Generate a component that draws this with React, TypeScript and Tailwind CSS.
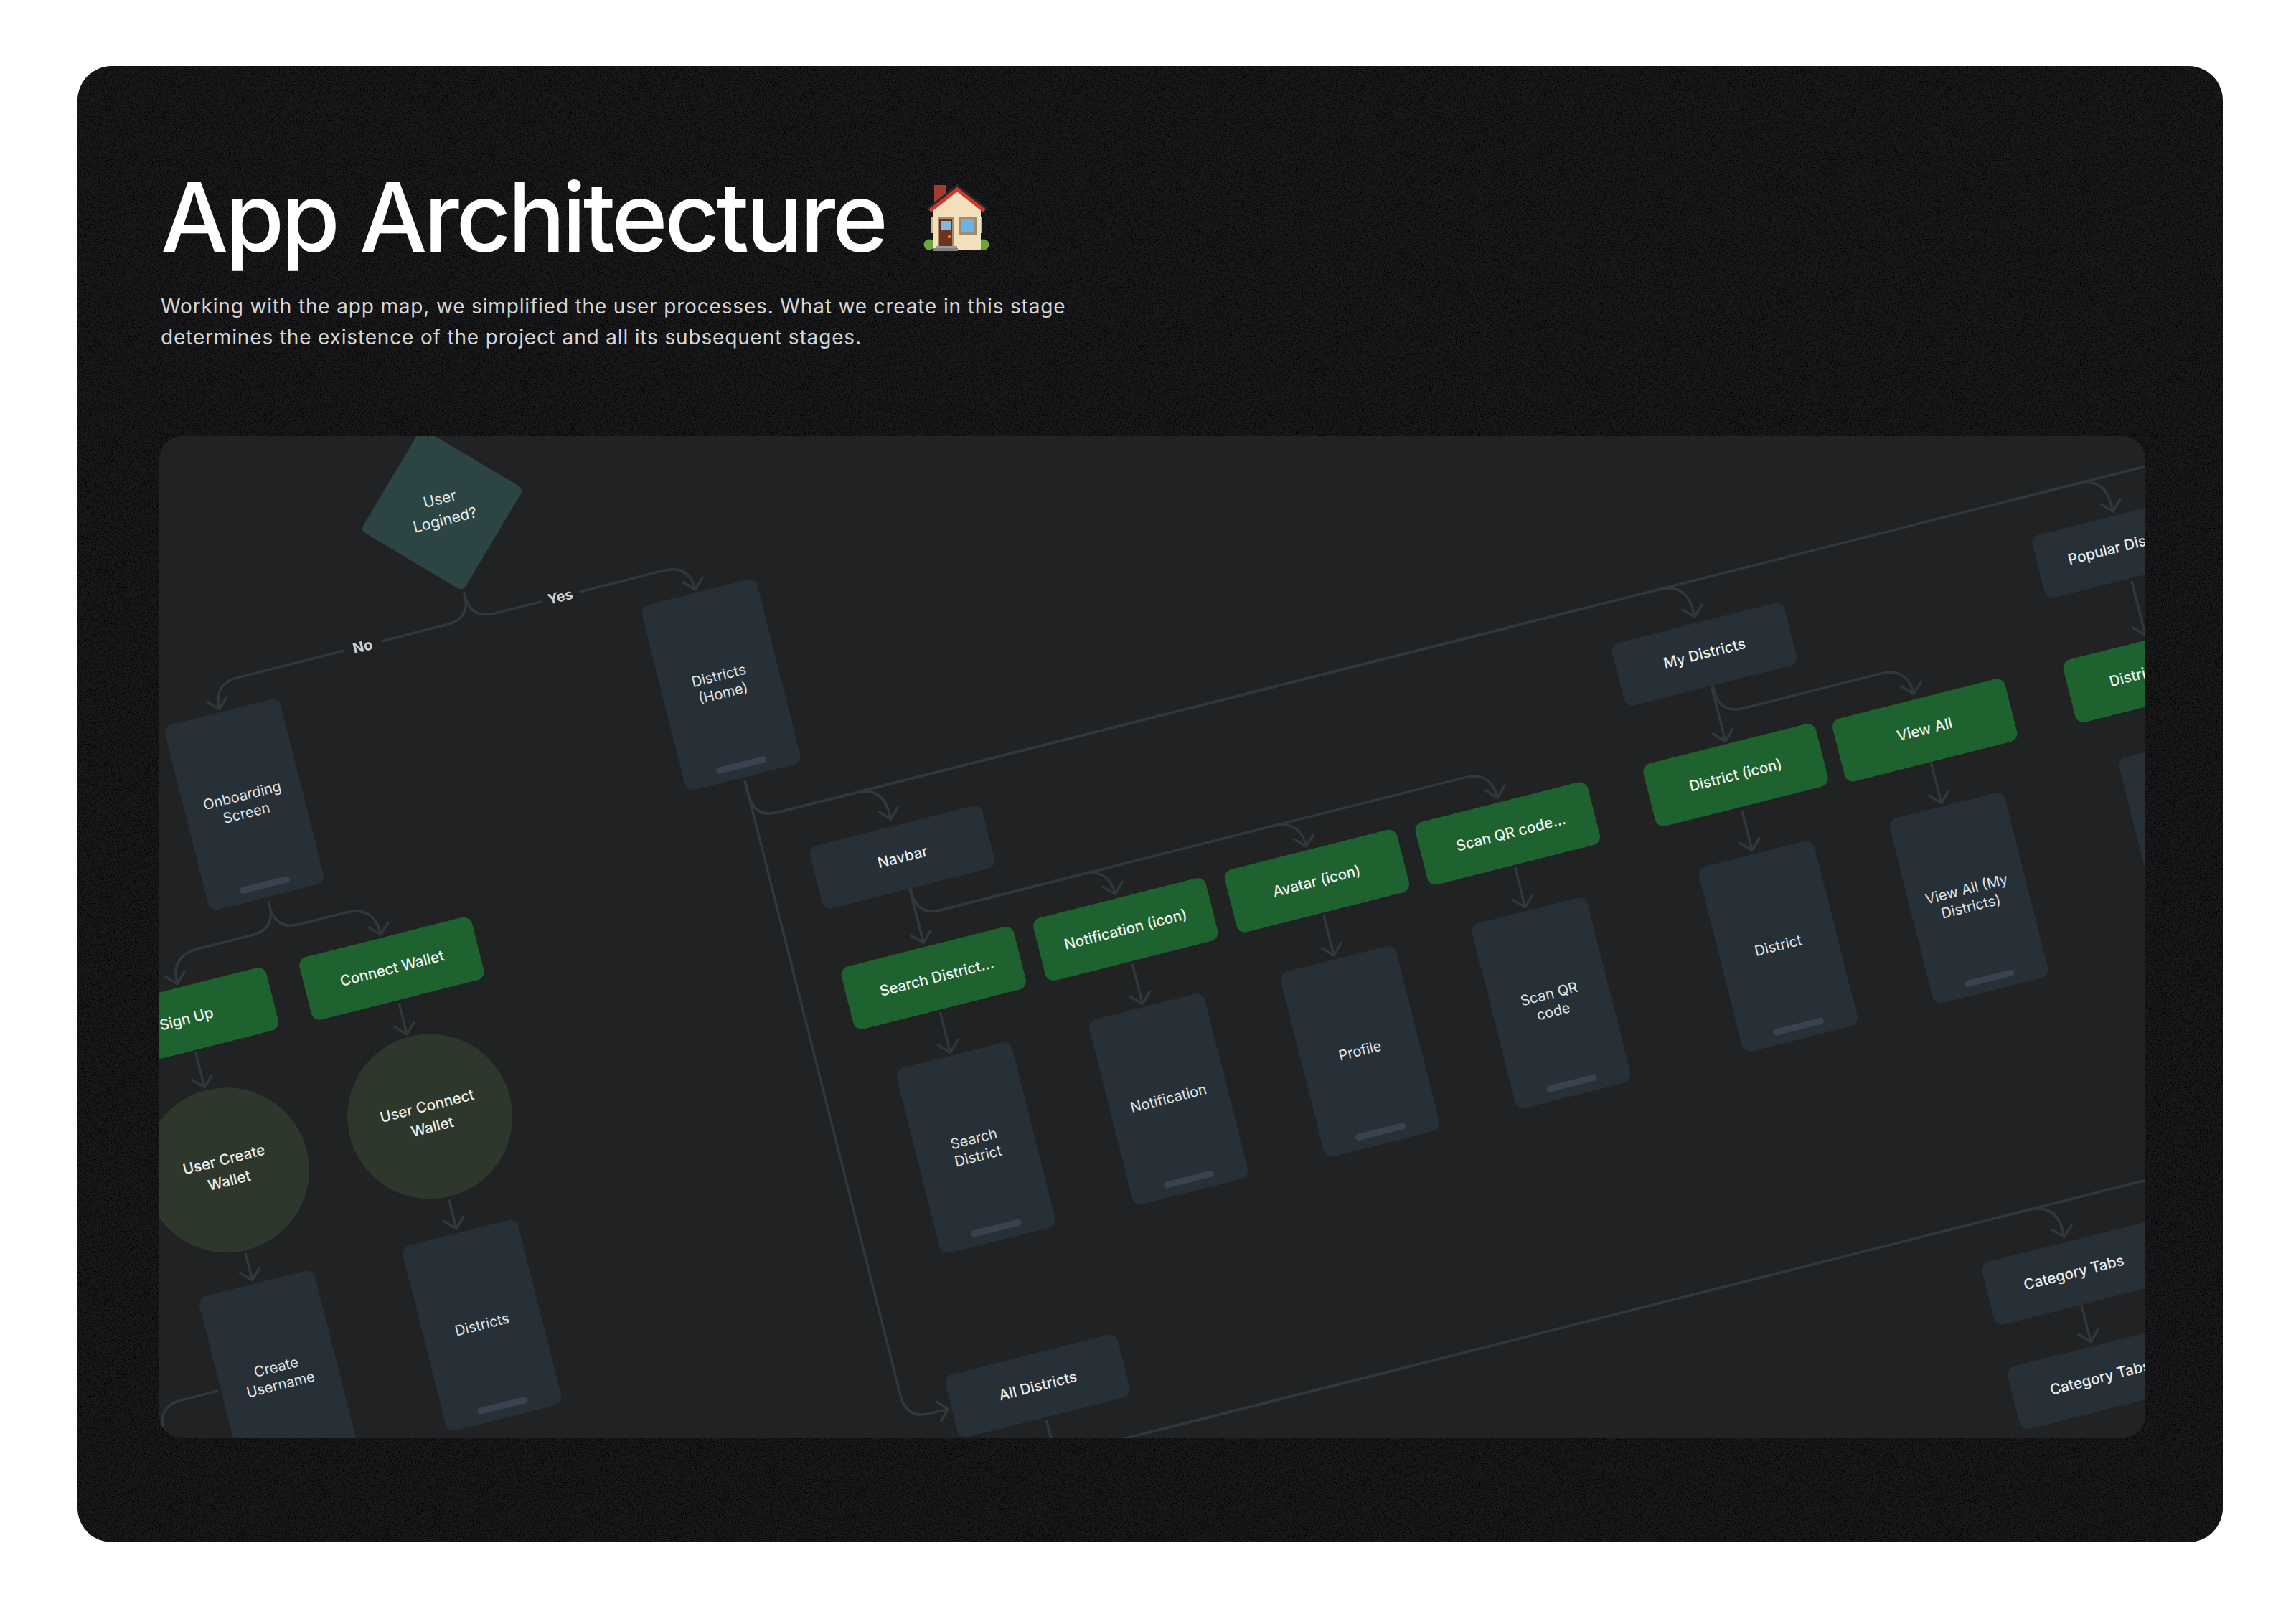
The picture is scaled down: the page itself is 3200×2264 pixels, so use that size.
const ANGLE = (14.2 * Math.PI) / 180;
const COS = Math.cos(ANGLE);
const SIN = Math.sin(ANGLE);
const R = 34;

type Pt = [number, number];

// screen pixel -> canvas coords (canvas is rotated around the panel's top left)
const toC = ([x, y]: Pt): Pt => [
  (x - 222) * COS - (y - 608) * SIN,
  (x - 222) * SIN + (y - 608) * COS,
];

const arrowDown = ([x, y]: Pt) => `M${x - 14} ${y - 14}L${x} ${y}L${x + 14} ${y - 14}`;
const arrowRight = ([x, y]: Pt) => `M${x - 14} ${y - 14}L${x} ${y}L${x - 14} ${y + 14}`;

// down, sideways, down
const branch = (start: Pt, bend: Pt, tip: Pt, head = true) => {
  const [su, sv] = toC(start);
  const [tu, tv] = toC(tip);
  const h = toC(bend)[1];
  const d = tu > su ? 1 : -1;
  const r1 = Math.min(R, h - sv);
  const r2 = Math.min(R + 6, tv - h);
  return (
    `M${su} ${sv}L${su} ${h - r1}Q${su} ${h} ${su + d * r1} ${h}` +
    `L${tu - d * r2} ${h}Q${tu} ${h} ${tu} ${h + r2}L${tu} ${tv}` +
    (head ? arrowDown([tu, tv]) : '')
  );
};

const straight = (start: Pt, tip: Pt) => {
  const [tu, tv] = toC(tip);
  return `M${tu} ${toC(start)[1]}L${tu} ${tv}` + arrowDown([tu, tv]);
};

const downRight = (start: Pt, tip: Pt) => {
  const [su, sv] = toC(start);
  const [tu, tv] = toC(tip);
  return `M${su} ${sv}L${su} ${tv - R}Q${su} ${tv} ${su + R} ${tv}L${tu} ${tv}` + arrowRight([tu, tv]);
};

const leftDown = (start: Pt, end: Pt) => {
  const [su, sv] = toC(start);
  const [eu, ev] = toC(end);
  return `M${su} ${sv}L${eu + R} ${sv}Q${eu} ${sv} ${eu} ${sv + R}L${eu} ${ev}`;
};

const MAIN_S: Pt = [1038.5, 1089.8];
const MAIN_B: Pt = [1074, 1135];
const NAV_S: Pt = [1269, 1238.8];
const NAV_B: Pt = [1304, 1270.4];

const edges: string[] = [
  // decision
  branch([647, 827], [679, 857.7], [969, 822]),
  branch([647, 827], [624.5, 870.4], [305.7, 988.8]),
  // onboarding
  branch([374.5, 1258], [407.7, 1291], [530.8, 1303]),
  branch([374.5, 1258], [350, 1304], [247, 1371.4]),
  straight([558.9, 1399.5], [567, 1441.8]),
  straight([273.8, 1468.4], [285, 1516]),
  straight([627.7, 1673.5], [636, 1713]),
  straight([344, 1748], [351.6, 1784.7]),
  leftDown([302.5, 1939.3], [232.3, 2010]),
  // home
  branch(MAIN_S, MAIN_B, [1241.6, 1141.8]),
  branch(MAIN_S, MAIN_B, [2362, 860]),
  branch(MAIN_S, MAIN_B, [2945, 713]),
  downRight(MAIN_S, [1321.7, 1964]),
  // navbar
  straight(NAV_S, [1286.9, 1314.3]),
  branch(NAV_S, NAV_B, [1554, 1246.4]),
  branch(NAV_S, NAV_B, [1820.7, 1180]),
  branch(NAV_S, NAV_B, [2087, 1112]),
  straight([1312.4, 1412], [1324.5, 1467.3]),
  straight([1581.5, 1344.4], [1592.3, 1399.5]),
  straight([1848, 1277], [1859, 1332]),
  straight([2114, 1210], [2125.6, 1264.8]),
  // my districts
  straight([2387.5, 957], [2404.8, 1033.4]),
  branch([2387.5, 957], [2422.7, 989.2], [2667.4, 967.4]),
  straight([2430.4, 1131], [2441.9, 1185.5]),
  straight([2695.5, 1063.8], [2705.7, 1119.5]),
  straight([2973.5, 810.7], [2990, 885.3]),
  // lower line
  branch([1458.7, 1980.7], [2300, 1820], [2877, 1724.6]),
  `M${toC([1600, 1980])[0]} ${toC([2300, 1820])[1]}L${toC([3200, 1600])[0]} ${toC([2300, 1820])[1]}`,
  `M${toC([2800, 700])[0]} ${toC(MAIN_B)[1]}L${toC([3200, 600])[0]} ${toC(MAIN_B)[1]}`,
  straight([2901, 1820.5], [2914, 1870.5]),
];

type NodeProps = { at: Pt; label: string };

function Phone({ at, label }: NodeProps) {
  const [u, v] = toC(at);
  return (
    <div
      className="absolute flex h-[266px] w-[166px] items-center justify-center whitespace-pre-line rounded-[12px] bg-[#283037] text-center text-[20px] leading-[25px] text-[#e2e5e7]"
      style={{ left: u - 83, top: v - 133 }}
    >
      {label}
      <span className="absolute bottom-[13px] left-1/2 h-[9px] w-[72px] -translate-x-1/2 rounded-full bg-[#3a4250]" />
    </div>
  );
}

function Screen({ at, label }: NodeProps) {
  const [u, v] = toC(at);
  return (
    <div
      className="absolute flex h-[90px] w-[248px] items-center justify-center whitespace-nowrap rounded-[12px] bg-[#283037] text-[20.5px] font-medium text-[#eceeef]"
      style={{ left: u - 124, top: v - 45 }}
    >
      {label}
    </div>
  );
}

function Action({ at, label, truncated }: NodeProps & { truncated?: boolean }) {
  const [u, v] = toC(at);
  return (
    <div
      className={`absolute flex h-[90px] w-[248px] items-center justify-center whitespace-nowrap rounded-[12px] bg-[#1e632f] text-[20.5px] font-medium text-[#f2f5f2] ${truncated ? 'pl-[10px]' : ''}`}
      style={{ left: u - 124, top: v - 45 }}
    >
      {label}
    </div>
  );
}

function Circle({ at, label }: NodeProps) {
  const [u, v] = toC(at);
  return (
    <div
      className="absolute flex h-[230px] w-[230px] items-center justify-center whitespace-pre-line rounded-full bg-[#2e372c] text-center text-[20.5px] font-medium leading-[30px] text-[#eceeea]"
      style={{ left: u - 115, top: v - 115 }}
    >
      {label}
    </div>
  );
}

function Decision({ at, label }: NodeProps) {
  const [u, v] = toC(at);
  return (
    <div
      className="absolute flex h-[166px] w-[166px] items-center justify-center"
      style={{ left: u - 83, top: v - 83 }}
    >
      <div className="absolute inset-0 rotate-45 rounded-[8px] bg-[#2c4443]" />
      <span className="relative whitespace-pre-line text-center text-[21px] leading-[30px] text-[#e8ecec]">{label}</span>
    </div>
  );
}

function EdgeLabel({ at, label }: NodeProps) {
  const [u, v] = toC(at);
  return (
    <div
      className="absolute flex h-[30px] w-[54px] items-center justify-center bg-[#212224] text-[20px] font-bold text-[#cfcfcf]"
      style={{ left: u - 27, top: v - 15 }}
    >
      {label}
    </div>
  );
}

function HouseEmoji() {
  return (
    <svg viewBox="0 0 120 115" className="h-[115px] w-[120px] shrink-0">
      <rect x="30" y="12" width="16" height="26" fill="#a23b30" />
      <circle cx="23" cy="95" r="7.5" fill="#6da53a" />
      <circle cx="99" cy="95" r="7.5" fill="#6da53a" />
      <rect x="25" y="57" width="4" height="22" fill="#c9b491" />
      <rect x="92" y="57" width="4" height="22" fill="#c9b491" />
      <path d="M28 47L62 20L95 47V102H28Z" fill="#f3dfba" />
      <path d="M22 46L62 14L102 46" fill="none" stroke="#2a2a2a" strokeWidth="5" />
      <path d="M24 48L62 18L100 48" fill="none" stroke="#d2382c" strokeWidth="5" />
      <rect x="35" y="57" width="23" height="41" fill="#a98a70" />
      <rect x="37" y="59" width="18" height="38" fill="#6d3320" />
      <rect x="40" y="62" width="13" height="13" fill="#7fb9e0" />
      <circle cx="51" cy="84" r="2" fill="#e0a52e" />
      <rect x="64" y="57" width="26" height="25" fill="#a08a70" />
      <rect x="67" y="60" width="19" height="18" fill="#6eb0e0" />
      <rect x="32" y="97" width="30" height="3" fill="#9a9a9a" />
      <rect x="29" y="100" width="34" height="4" fill="#808080" />
    </svg>
  );
}

export default function App() {
  return (
    <div className="h-[2264px] w-[3200px] overflow-hidden bg-white pl-[108px] pt-[92px] font-['Inter',sans-serif]">
      <div className="relative flex h-[2058px] w-[2990px] flex-col overflow-hidden rounded-[48px] bg-[#19191b] pl-[114px] pr-[108px]">
        {/* grain */}
        <svg className="absolute inset-0 h-full w-full">
          <filter id="grain">
            <feTurbulence type="fractalNoise" baseFrequency="0.7" numOctaves="2" seed="4" />
            <feColorMatrix values="0 0 0 0 0  0 0 0 0 0  0 0 0 0 0  0 0 0 3 -1.4" />
          </filter>
          <rect width="100%" height="100%" filter="url(#grain)" />
        </svg>

        <div className="relative ml-[2px] mt-[131px] flex items-center gap-[38px]">
          <h1 className="text-[133px] font-[450] leading-[160px] tracking-[-0.0325em] text-white">App Architecture</h1>
          <HouseEmoji />
        </div>
        <p className="relative ml-[2px] mt-[23px] text-[28px] leading-[43px] tracking-[0.03em] text-[#d6d6d6]">
          Working with the app map, we simplified the user processes. What we create in this stage
          <br />
          determines the existence of the project and all its subsequent stages.
        </p>

        <div className="relative mt-[116px] h-[1397px] w-[2768px] overflow-hidden rounded-[32px] bg-[#212224]">
          <div className="absolute left-0 top-0 origin-top-left rotate-[-14.2deg]">
            <svg className="absolute left-0 top-0 h-px w-px overflow-visible">
              {edges.map((d, i) => (
                <path key={i} d={d} fill="none" stroke="#2f383b" strokeWidth="3.5" strokeLinecap="round" strokeLinejoin="round" />
              ))}
            </svg>

            <Decision at={[616.5, 710]} label={'User\nLogined?'} />
            <EdgeLabel at={[780.8, 832]} label="Yes" />
            <EdgeLabel at={[505.3, 901]} label="No" />

            <Phone at={[340.5, 1121.5]} label={'Onboarding\nScreen'} />
            <Phone at={[1005, 955]} label={'Districts\n(Home)'} />
            <Phone at={[672, 1847]} label="Districts" />
            <Phone at={[388, 1918]} label={'Create\nUsername'} />
            <Phone at={[1360.5, 1600.5]} label={'Search\nDistrict'} />
            <Phone at={[1628.7, 1532]} label="Notification" />
            <Phone at={[1895.6, 1465.4]} label="Profile" />
            <Phone at={[2162, 1398]} label={'Scan QR\ncode'} />
            <Phone at={[2478.6, 1319]} label="District" />
            <Phone at={[2743.8, 1251.6]} label={'View All (My\nDistricts)'} />
            <Phone at={[3064, 1167]} label="District" />

            <Action at={[546.5, 1350.5]} label="Connect Wallet" />
            <Action at={[260, 1421]} label="Sign Up" />
            <Action at={[1300.9, 1363.8]} label="Search District..." truncated />
            <Action at={[1568.8, 1296]} label="Notification (icon)" />
            <Action at={[1835, 1228.5]} label="Avatar (icon)" />
            <Action at={[2101, 1162]} label="Scan QR code..." truncated />
            <Action at={[2419, 1081]} label="District (icon)" />
            <Action at={[2682.5, 1017.7]} label="View All" />
            <Action at={[3004.6, 935]} label="District (icon)" />

            <Screen at={[1258, 1194.7]} label="Navbar" />
            <Screen at={[2375.7, 911.5]} label="My Districts" />
            <Screen at={[2961, 761.6]} label="Popular Districts" />
            <Screen at={[2890.5, 1774.6]} label="Category Tabs" />
            <Screen at={[2927, 1920.6]} label="Category Tabs" />
            <Screen at={[1446.5, 1932]} label="All Districts" />

            <Circle at={[599, 1557]} label={'User Connect\nWallet'} />
            <Circle at={[315.7, 1631]} label={'User Create\nWallet'} />
          </div>
        </div>
      </div>
    </div>
  );
}
